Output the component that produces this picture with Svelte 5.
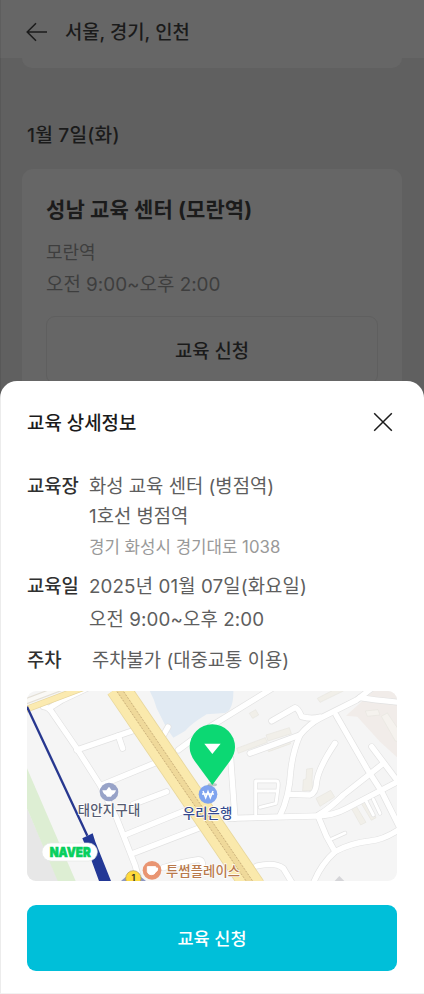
<script>
  const detail = [
    { label: '교육장', lines: [
      { text: '화성 교육 센터 (병점역)', h: 30 },
      { text: '1호선 병점역', h: 30 },
      { text: '경기 화성시 경기대로 1038', h: 31, small: true }
    ] },
    { label: '교육일', lines: [
      { text: '2025년 01월 07일(화요일)', h: 33, wide: true },
      { text: '오전 9:00~오후 2:00', h: 32, wide: true }
    ] },
    { label: '주차', inset: true, lines: [
      { text: '주차불가 (대중교통 이용)', h: 32 }
    ] }
  ];

  const roads = [
    'M70 65Q88 66 100 88L170 190L240 300L290 400L345 540L362 600',
    'M90 68L125 46L205 8',
    'M170 195L345 135',
    'M295 152L308 190',
    'M245 300L425 226',
    'M340 358L440 320',
    'M315 450L500 375',
    'M340 505L535 430',
    'M425 160L444 126',
    'M475 195L570 125L765 5',
    'M755 108L825 68Q835 70 845 95Q875 103 900 96',
    'M690 205L840 150Q870 115 900 100L960 70L1010 45L1055 10',
    'M840 150Q818 200 812 260Q808 335 780 392',
    'M808 328L870 330Q888 325 890 290Q895 250 945 175',
    'M632 220L645 400',
    'M628 400L890 393Q940 392 980 370L1140 286',
    'M895 390Q930 370 970 330L1090 235',
    'M948 90L1040 250L1085 320L1140 430',
    'M1055 185L1140 298',
    'M895 395L920 455L945 500Q900 540 878 600',
    'M945 500Q990 475 1050 468Q1090 465 1140 432',
    'M710 543Q765 530 790 550L820 600',
    'M1020 38Q1060 45 1140 52',
    'M430 548Q490 530 535 524Q550 524 548 545'
  ];
  const lanes = 'M707 388V288H770Q777 288 774 310L768 355L720 367M710 318H770M1038 348L1060 390M1060 343L1080 385M935 462L975 444';
</script>

<div class="screen">
  <header>
    <svg class="back" width="22" height="20" viewBox="0 0 22 20" aria-hidden="true"><path d="M10 1.3L1.2 10L10 18.7M1.2 10H21" /></svg>
    <h1>서울, 경기, 인천</h1>
  </header>
  <main>
    <div class="previous"></div>
    <h2>1월 7일(화)</h2>
    <section class="card">
      <h3>성남 교육 센터 (모란역)</h3>
      <p class="station">모란역</p>
      <p class="time">오전 9:00~오후 2:00</p>
      <button class="outline">교육 신청</button>
    </section>
  </main>

  <div class="sheet">
    <div class="sheet-head">
      <h2>교육 상세정보</h2>
      <svg width="20" height="20" viewBox="0 0 20 20" aria-hidden="true"><path d="M1.2 1.2L18.8 18.8M18.8 1.2L1.2 18.8" /></svg>
    </div>
    <dl>
      {#each detail as row}
        <div class="row" class:inset={row.inset}>
          <dt>{row.label}</dt>
          <dd>
            {#each row.lines as line}
              <span class:small={line.small} class:wide={line.wide} style="height:{line.h}px">{line.text}</span>
            {/each}
          </dd>
        </div>
      {/each}
    </dl>

    <svg class="map" viewBox="21 18 1110 570" preserveAspectRatio="none">
      <rect x="21" y="18" width="1110" height="570" fill="#f5f5f5" />
      <path d="M21 370L115 588H21Z" fill="#e7e7e7" />
      <path d="M21 250L167 588H113L21 370Z" fill="#ddeed3" />
      <path d="M385 10Q402 40 410 70L440 130L460 158L495 138Q515 115 560 88L615 84Q642 76 640 10Z" fill="#e1eaf3" />
      <path d="M978 92L1060 18H1140V225L1080 170L1012 95Z" fill="#f1ece9" />
      <g fill="#f1efe9" stroke="#e7e5df" stroke-width="2">
        <path d="M892 40L960 5L970 18L900 52Z" />
        <path d="M688 85L707 74L716 90L698 100Z" />
        <path d="M650 190L736 158L742 172L655 205Z" />
        <path d="M738 150L808 128L814 146L744 168Z" />
        <path d="M740 190L808 164L812 176L746 200Z" />
        <path d="M860 252L878 250L876 285L878 316L848 318L850 284L858 282Z" />
        <path d="M888 340L932 316L944 336L900 364Z" />
        <path d="M994 370L1008 362L1038 412L1022 420Z" />
        <path d="M1022 352L1038 344L1068 398L1054 406Z" />
        <path d="M1036 78L1074 74L1080 90L1042 94Z" fill="#f5f2ee" />
        <path d="M1084 94L1102 84L1140 140V172L1126 168Z" fill="#f5f2ee" />
      </g>
      <g fill="none" stroke-linecap="round" stroke-linejoin="round">
        {#each roads as d}<path {d} stroke="#e2e2e2" stroke-width="20" />{/each}
        <path d={lanes} stroke="#e2e2e2" stroke-width="13" />
        {#each roads as d}<path {d} stroke="#fff" stroke-width="16" />{/each}
        <path d={lanes} stroke="#fff" stroke-width="9" />
      </g>
      <path d="M10 52L120 10" stroke="#e3dfd5" stroke-width="19" />
      <path d="M10 52L120 10" stroke="#faf9f6" stroke-width="12" />
      <path d="M10 76L190 8" stroke="#e6d49c" stroke-width="20" />
      <path d="M10 76L190 8" stroke="#fbeab0" stroke-width="16" />
      <g fill="none">
        <path d="M293 8L701 607" stroke="#e8d79c" stroke-width="74" />
        <path d="M293 8L701 607" stroke="#fae9ac" stroke-width="69" />
        <path d="M293 8L701 607" stroke="#efd99a" stroke-width="19" />
        <path d="M286 12L694 611M300 4L708 603" stroke="#c9b07c" stroke-width="3" stroke-dasharray="5 5" />
      </g>
      <path d="M21 65L202 452" stroke="#27378f" stroke-width="7" />
      <path d="M187 460L218 445L226 470L273 588H237L214 525Z" fill="#233896" />
      <path d="M944 588L958 573L973 588Z" fill="#d5d5d8" />

      <circle cx="267" cy="321" r="28" fill="#98a3c8" />
      <path d="M247 316L259 316L267 305L275 316L288 316Q284 328 277 329L273 335H261L257 329Q250 328 247 316Z" fill="#fff" />
      <text x="173" y="390" textLength="188" class="place" fill="#565b70">태안지구대</text>

      <circle cx="564" cy="328" r="28" fill="#7fa3ef" />
      <path d="M549 318L557 338L564 320L571 338L579 318M546 327H582" fill="none" stroke="#fff" stroke-width="4.5" />
      <text x="488" y="399" textLength="149" class="place" fill="#34498d">우리은행</text>

      <ellipse cx="577" cy="299" rx="14" ry="5" fill="#8a9a98" opacity=".5" />
      <path d="M577 300L524 228Q509 207 509 186A68 68 0 0 1 645 186Q645 207 630 228Z" fill="#0cd873" />
      <path d="M553 176H602L577 207Z" fill="#fff" />

      <path d="M303 588L316 577H364L378 588Z" fill="#6370ad" opacity=".7" />
      <circle cx="340" cy="580" r="23" fill="#ffda3c" stroke="#a99656" stroke-width="2" />
      <text x="340" y="587" text-anchor="middle" class="exit">1</text>
      <circle cx="396" cy="556" r="28" fill="#e99572" />
      <path d="M382 545H407V560Q405 569 394 569Q384 569 382 560ZM407 549H413Q414 560 405 561" fill="#fff" stroke="#fff" stroke-width="3" />
      <text x="438" y="574" textLength="222" class="place" fill="#b9794b">투썸플레이스</text>

      <rect x="66" y="474" width="166" height="54" rx="27" fill="#fff" stroke="#e5e8e5" stroke-width="2" />
      <text x="89" y="515" textLength="123" lengthAdjust="spacingAndGlyphs" class="naver">NAVER</text>
    </svg>
    <button class="apply">교육 신청</button>
  </div>
</div>

<style>
  :global(body) { margin: 0; }
  .screen {
    position: relative;
    width: 424px;
    height: 994px;
    overflow: hidden;
    background: #606060;
    color: #1b1b1b;
    font-family: Inter, "Noto Sans CJK KR", sans-serif;
    white-space: nowrap;
  }
  .screen::after {
    content: "";
    position: absolute;
    inset: 0;
    border-left: 1px solid rgba(0, 0, 0, .07);
    border-bottom: 1px solid rgba(0, 0, 0, .05);
    pointer-events: none;
  }
  h1, h2, h3, p, dl, dd, dt { margin: 0; }
  h1, h2, h3, dt { font-weight: 500; }
  svg { display: block; flex: none; }
  header {
    display: flex;
    align-items: center;
    gap: 17px;
    height: 58px;
    padding: 8px 0 0 26px;
    box-sizing: border-box;
    background: #666;
  }
  header svg, .sheet-head svg { fill: none; stroke: #1b1b1b; stroke-width: 1.5; }
  header svg { margin-top: -2px; }
  h1 { font-size: 18.8px; line-height: 28px; }
  main { display: flex; flex-direction: column; padding: 0 22px; }
  .previous { height: 10px; border-radius: 0 0 10px 10px; background: #666; }
  main > h2 { padding: 53px 0 0 5px; font-size: 19.2px; line-height: 28px; height: 48px; letter-spacing: .2px; }
  .card { height: 230px; padding: 25px 24px 0; box-sizing: border-box; border-radius: 11px; background: #666; }
  h3 { font-size: 21px; line-height: 32px; font-weight: 700; letter-spacing: .12px; }
  .card p { font-size: 18.9px; line-height: 32px; color: #3e3e3e; font-weight: 400; }
  .card .station { margin-top: 11px; font-size: 18px; }
  button { display: block; font-family: inherit; padding: 0; box-sizing: border-box; }
  .outline {
    width: 332px;
    height: 68px;
    margin-top: 15px;
    padding-bottom: 1px;
    border: 1px solid #5f5f5f;
    border-radius: 9px;
    background: none;
    color: #1b1b1b;
    font-size: 18.8px;
    font-weight: 500;
  }
  .sheet {
    position: absolute;
    left: 0;
    right: 0;
    top: 381px;
    bottom: 0;
    padding: 0 27px;
    border-radius: 17px 17px 0 0;
    background: #fff;
  }
  .sheet-head {
    display: flex;
    align-items: center;
    justify-content: space-between;
    height: 82px;
    padding-right: 4px;
  }
  .sheet-head h2 { font-size: 18.9px; margin-top: -1px; }
  dl { height: 228px; padding-top: 8px; box-sizing: border-box; }
  .row { display: flex; }
  .row + .row { margin-top: 9px; }
  dt { width: 62px; font-size: 18.8px; line-height: 32px; color: #303030; }
  dd { display: flex; flex-direction: column; }
  dd span { font-size: 18.8px; line-height: 32px; color: #5e5e5e; }
  dd .small { font-size: 16.8px; color: #999; }
  dd .wide { letter-spacing: .12px; }
  .inset dd { padding-left: 3px; }
  .map { width: 370px; height: 190px; border-radius: 9px; }
  .place { font: 500 40px "Noto Sans CJK KR", sans-serif; paint-order: stroke; stroke: #fff; stroke-width: 4px; }
  .exit { font: 700 26px Inter, sans-serif; fill: #3b361f; }
  .naver { font: 900 40px Inter, sans-serif; fill: #08cf5d; stroke: #08cf5d; stroke-width: 2px; }
  .apply {
    width: 370px;
    height: 66px;
    margin-top: 24px;
    padding-bottom: 2px;
    border: 0;
    border-radius: 9px;
    background: #00bfd9;
    color: #fff;
    font-size: 17.5px;
    font-weight: 500;
  }
</style>
